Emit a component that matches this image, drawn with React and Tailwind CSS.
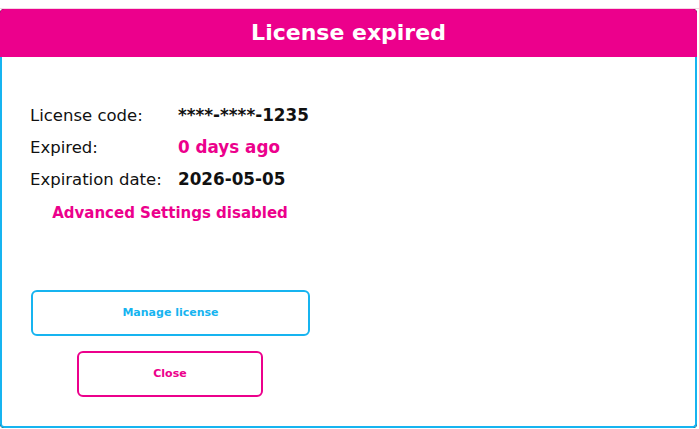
export default function App() {
  const font = { fontFamily: '"DejaVu Sans", Verdana, sans-serif' };
  return (
    <div className="w-[699px] h-[429px] overflow-hidden bg-white" style={font}>
      <div className="h-[9px] border-b border-[#f6d3e4]" />
      <div className="w-[697px] h-[419px] flex flex-col rounded-[4px] overflow-hidden bg-[#111]">
        <div className="h-[48px] shrink-0 bg-[#ec008c] flex items-center justify-center rounded-t-[4px]">
          <span className="text-white font-bold text-[22px] leading-none">License expired</span>
        </div>
        <div className="flex-1 bg-white border-x-2 border-b-2 border-[#17b4f0] rounded-b-[4px] pt-[43px] pl-[28px]">
          <div className="w-[280px] flex flex-col">
            <div className="h-[32px] flex items-center text-[16.5px] text-[#111]">
              <span className="w-[148px]">License code:</span>
              <span className="font-bold text-[16.8px]">****-****-1235</span>
            </div>
            <div className="h-[32px] flex items-center text-[16.5px] text-[#111]">
              <span className="w-[148px]">Expired:</span>
              <span className="font-bold text-[16.8px] text-[#ec008c]">0 days ago</span>
            </div>
            <div className="h-[32px] flex items-center text-[16.5px] text-[#111]">
              <span className="w-[148px]">Expiration date:</span>
              <span className="font-bold text-[16.8px]">2026-05-05</span>
            </div>
            <div className="mt-[7px] h-[20px] flex items-center justify-center text-[15px] font-bold text-[#ec008c]">
              Advanced Settings disabled
            </div>
            <button className="mt-[67px] h-[46px] w-[279px] ml-px border-2 border-[#17b4f0] rounded-[6px] bg-white text-[11px] font-bold text-[#17b4f0] flex items-center justify-center">
              Manage license
            </button>
            <button className="mt-[15px] h-[46px] w-[186px] ml-[47px] border-2 border-[#ec008c] rounded-[6px] bg-white text-[11px] font-bold text-[#ec008c] flex items-center justify-center">
              Close
            </button>
          </div>
        </div>
      </div>
      <div className="h-[20px] flex items-start text-[12px] font-bold pl-[2px] gap-[36px] pt-[1px]">
        <span className="text-[#5bc236]">Initializing license</span>
        <span className="text-[#ec008c]">Disabled features</span>
      </div>
    </div>
  );
}
